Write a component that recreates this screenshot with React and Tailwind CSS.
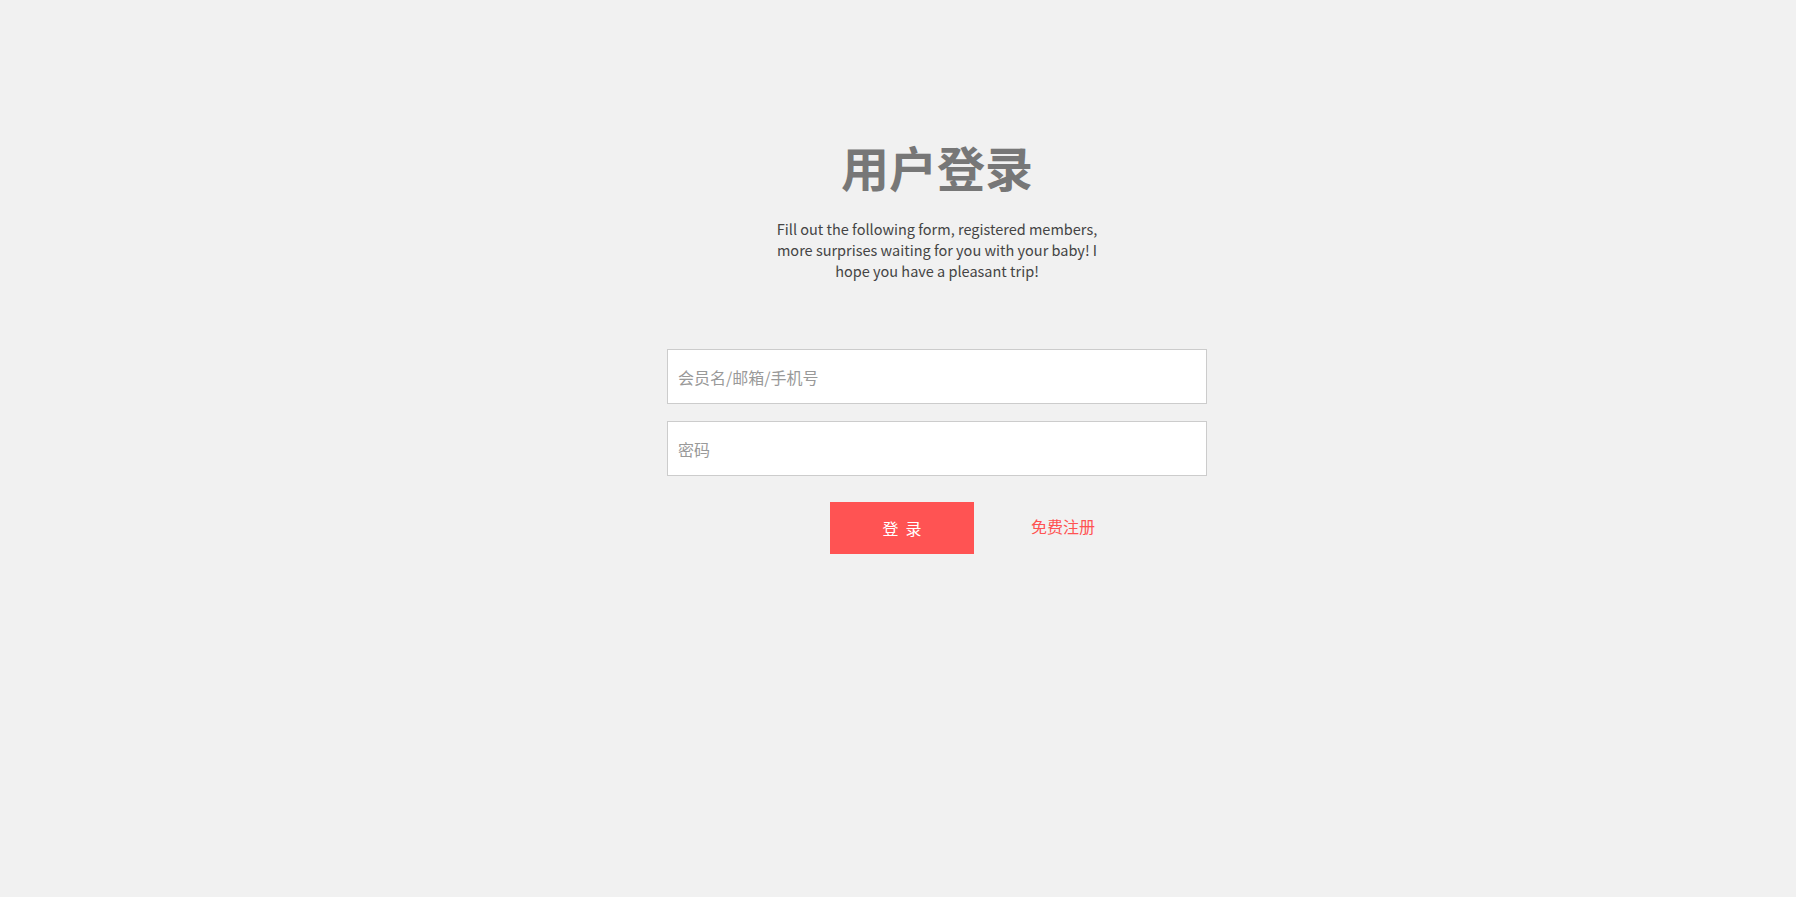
export default function App() {
  return (
    <div
      className="min-h-screen w-full bg-[#f1f1f1] flex justify-center pl-[78px]"
      style={{ fontFamily: '"Noto Sans CJK SC", "Noto Sans", sans-serif' }}
    >
      <div className="w-[540px] flex flex-col items-center pt-[142px]">
        {/* Title */}
        <h1 className="text-[48px] leading-[48px] font-bold text-[#777]">用户登录</h1>
        <p className="mt-[28px] w-[340px] text-center text-[14.5px] leading-[21px] text-[#444]">
          Fill out the following form, registered members, more surprises waiting for you with
          your baby! I hope you have a pleasant trip!
        </p>

        {/* Form */}
        <form className="mt-[68px] w-full flex flex-col gap-[17px]" onSubmit={(e) => e.preventDefault()}>
          <input
            type="text"
            placeholder="会员名/邮箱/手机号"
            className="w-full h-[55px] bg-white border border-[#ccc] px-[10px] text-[16px] text-[#333] placeholder:text-[#999] outline-none"
          />
          <input
            type="password"
            placeholder="密码"
            className="w-full h-[55px] bg-white border border-[#ccc] px-[10px] text-[16px] text-[#333] placeholder:text-[#999] outline-none"
          />
          <div className="mt-[9px] flex items-center">
            <button
              type="submit"
              className="ml-[163px] w-[144px] h-[52px] bg-[#ff5353] text-white text-[16px]"
            >
              登&nbsp;&nbsp;录
            </button>
            <a href="#" className="ml-[57px] -mt-[4px] text-[16px] text-[#ff5353]">
              免费注册
            </a>
          </div>
        </form>
      </div>
    </div>
  );
}
